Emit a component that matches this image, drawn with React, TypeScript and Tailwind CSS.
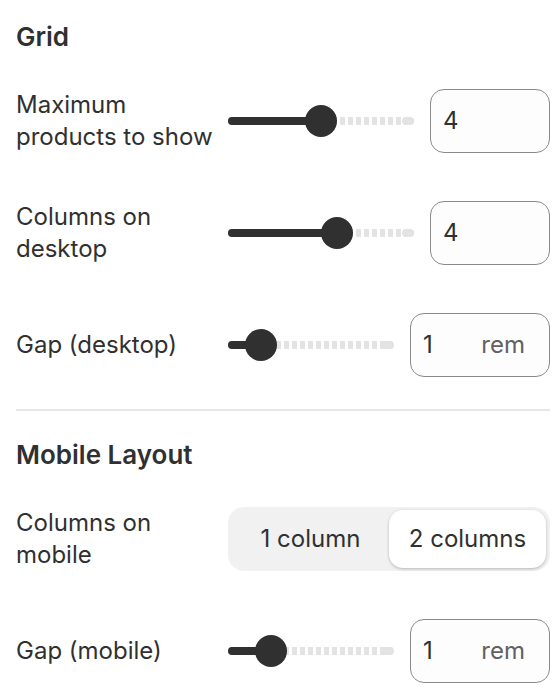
import React from "react";

type SliderRow = {
  label: string;
  pct: number;
  value: string;
  suffix?: string;
  inputWidth: "narrow" | "wide";
};

function Slider({ pct }: { pct: number }) {
  return (
    <div className="relative flex h-8 flex-1 items-center">
      <div className="h-2 flex-1 rounded-full bg-[repeating-linear-gradient(90deg,#e3e3e3_0px,#e3e3e3_5px,transparent_5px,transparent_8px)]" />
      <div className="absolute right-0 h-2 w-3 rounded-full bg-[#e3e3e3]" />
      <div
        className="absolute left-0 h-2 rounded-full bg-[#303030]"
        style={{ width: `${pct}%` }}
      />
      <div
        className="absolute top-0 h-8 w-8 -translate-x-1/2 rounded-full bg-[#303030]"
        style={{ left: `${pct}%` }}
      />
    </div>
  );
}

function NumberInput({ value, suffix, wide }: { value: string; suffix?: string; wide: boolean }) {
  return (
    <div
      className={
        (wide ? "w-[140px] " : "w-[120px] ") +
        "flex h-16 shrink-0 items-center rounded-[14px] border border-[#8a8a8a] bg-[#fdfdfd] pl-3 pr-6 text-[24px] text-[#303030]"
      }
    >
      <span className="flex-1">{value}</span>
      {suffix && <span className="text-[#616161]">{suffix}</span>}
    </div>
  );
}

function Row({ label, children }: { label: string; children: React.ReactNode }) {
  return (
    <div className="flex h-16 items-center gap-3">
      <div className="w-[200px] shrink-0 text-[24px] leading-8 text-[#303030]">{label}</div>
      <div className="flex flex-1 items-center gap-4">{children}</div>
    </div>
  );
}

const gridRows: SliderRow[] = [
  { label: "Maximum products to show", pct: 50, value: "4", inputWidth: "narrow" },
  { label: "Columns on desktop", pct: 58.5, value: "4", inputWidth: "narrow" },
  { label: "Gap (desktop)", pct: 20, value: "1", suffix: "rem", inputWidth: "wide" },
];

export default function App() {
  return (
    <div className="min-h-[700px] bg-white pl-4 pr-[10px] pt-[21px] font-['Inter',sans-serif] text-[#303030]">
      <h2 className="text-[26px] font-semibold leading-8">Grid</h2>
      <div className="mt-9 flex flex-col gap-12">
        {gridRows.map((r) => (
          <Row key={r.label} label={r.label}>
            <Slider pct={r.pct} />
            <NumberInput value={r.value} suffix={r.suffix} wide={r.inputWidth === "wide"} />
          </Row>
        ))}
      </div>
      <div className="mt-8 h-[2px] bg-[#e6e6e6]" />
      <h2 className="mt-7 text-[26px] font-semibold leading-8">Mobile Layout</h2>
      <div className="mt-9 flex flex-col gap-12">
        <Row label="Columns on mobile">
          <div className="grid h-16 flex-1 grid-cols-2 rounded-2xl bg-[#f1f1f1] px-1 py-[3px] text-[24px]">
            <button className="flex items-center justify-center rounded-[14px] text-[#303030]">
              1 column
            </button>
            <button className="flex items-center justify-center rounded-[14px] bg-white text-[#303030] shadow-[0_1px_3px_rgba(0,0,0,0.25)]">
              2 columns
            </button>
          </div>
        </Row>
        <Row label="Gap (mobile)">
          <Slider pct={26} />
          <NumberInput value="1" suffix="rem" wide />
        </Row>
      </div>
    </div>
  );
}
